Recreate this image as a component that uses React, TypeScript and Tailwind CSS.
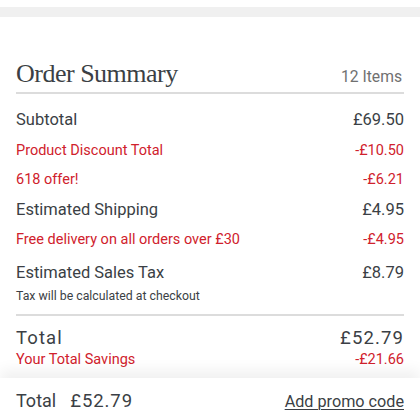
const rows = [
  { label: 'Subtotal', value: '£69.50', red: false, h: 'h-[31px]' },
  { label: 'Product Discount Total', value: '-£10.50', red: true, h: 'h-[29px]' },
  { label: '618 offer!', value: '-£6.21', red: true, h: 'h-[30px]' },
  { label: 'Estimated Shipping', value: '£4.95', red: false, h: 'h-[30px]' },
  { label: 'Free delivery on all orders over £30', value: '-£4.95', red: true, h: 'h-[34px]' },
];

export default function App() {
  return (
    <div className="h-[420px] w-[420px] flex flex-col bg-white overflow-hidden font-['Roboto',sans-serif] text-[#3b3f45]">
      {/* top strip */}
      <div className="h-[7px] shrink-0" />
      <div className="h-[10px] shrink-0 bg-[#f0f0f0]" />

      <div className="flex-1 px-4 pt-[42px]">
        {/* Header */}
        <div className="flex items-baseline justify-between h-[30px] border-b-2 border-[#dcdcdc] box-content pb-[3px]">
          <h2 className="font-['Liberation_Serif',serif] text-[26px] leading-[30px] tracking-[-0.5px] text-[#3b3f45]">
            Order Summary
          </h2>
          <span className="mr-[2px] text-[15.7px] leading-[30px] text-[#707070]">12 Items</span>
        </div>

        {/* Lines */}
        <div className="mt-[11px]">
          {rows.map((r) => (
            <div
              key={r.label}
              className={`flex justify-between ${r.h} ${
                r.red ? 'text-[14.5px] leading-[30px] text-[#d0212c]' : 'text-[16.5px] leading-[30px]'
              }`}
            >
              <span>{r.label}</span>
              <span>{r.value}</span>
            </div>
          ))}
          <div className="flex justify-between h-[28px] text-[16.5px] leading-[28px]">
            <span>Estimated Sales Tax</span>
            <span>£8.79</span>
          </div>
          <div className="h-[18px] text-[12.3px] leading-[18px]">Tax will be calculated at checkout</div>
        </div>

        <div className="mt-[9px] h-[2px] bg-[#dcdcdc]" />

        <div className="mt-[9px]">
          <div className="flex justify-between h-[25px] text-[18.5px] leading-[26px] tracking-[0.06em]">
            <span>Total</span>
            <span>£52.79</span>
          </div>
          <div className="flex justify-between h-[20px] text-[14.5px] leading-[20px] text-[#d0212c]">
            <span>Your Total Savings</span>
            <span>-£21.66</span>
          </div>
        </div>
      </div>

      {/* Sticky footer */}
      <div className="relative h-[42px] shrink-0 bg-white px-4 pt-[4px] flex items-baseline justify-between shadow-[0_-8px_14px_rgba(0,0,0,0.06)]">
        <div className="flex items-baseline gap-[14px] leading-[38px]">
          <span className="text-[18px]">Total</span>
          <span className="text-[18.5px] tracking-[0.05em]">£52.79</span>
        </div>
        <button className="text-[16.2px] leading-[38px] underline underline-offset-[2px] decoration-1 text-[#3b3f45]">
          Add promo code
        </button>
      </div>
    </div>
  );
}
